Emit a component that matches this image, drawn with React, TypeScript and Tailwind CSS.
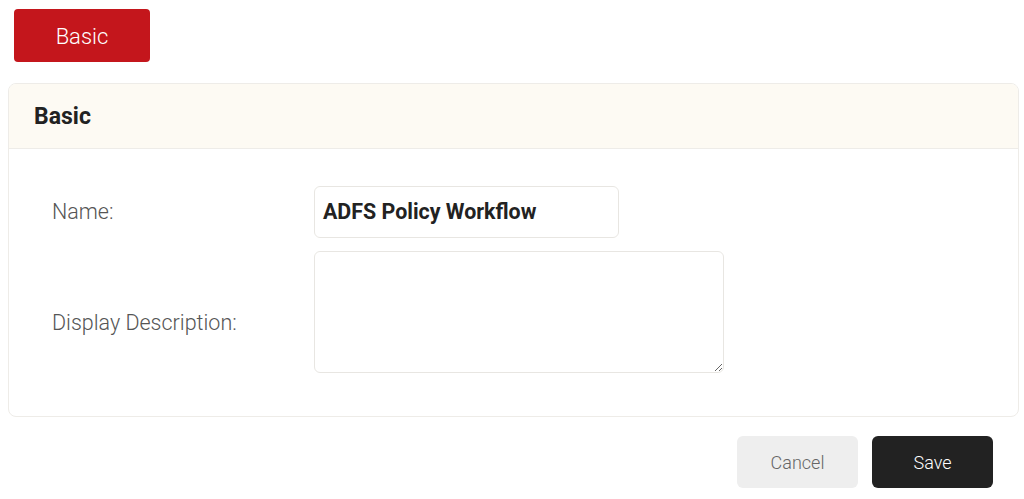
import React from "react";

export default function App() {
  return (
    <div className="w-[1024px] h-[499px] bg-white overflow-hidden" style={{ fontFamily: "Roboto, 'Liberation Sans', sans-serif" }}>
      <div className="pt-[9px] pl-[14px]">
        <button className="w-[136px] h-[53px] rounded-[4px] bg-[#c4161c] text-white text-[22px] font-light pt-[1px]">Basic</button>
      </div>
      <div className="mt-[21px] ml-[8px] w-[1011px] h-[334px] border border-[#eeece8] rounded-[8px] overflow-hidden">
        <div className="h-[65px] bg-[#fdfaf3] border-b border-[#eeece8] flex items-center pl-[25px] pt-[3px]">
          <span className="text-[23px] font-bold text-[#222]">Basic</span>
        </div>
        <div className="pl-[43px] pt-[37px]">
          <div className="flex items-center">
            <div className="w-[262px] text-[21.5px] font-light text-[#555]">Name:</div>
            <div className="w-[305px] h-[52px] border border-[#e8e6e2] rounded-[6px] flex items-center px-[8px] pt-[1px]">
              <span className="text-[21.4px] font-bold text-[#222]">ADFS Policy Workflow</span>
            </div>
          </div>
          <div className="flex mt-[13px]">
            <div className="w-[262px] text-[21.5px] font-light text-[#555] pt-[56px]">Display Description:</div>
            <textarea className="w-[410px] h-[122px] border border-[#e8e6e2] rounded-[6px] outline-none resize-y" />
          </div>
        </div>
      </div>
      <div className="flex justify-end gap-[14px] mt-[19px] pr-[31px]">
        <button className="w-[121px] h-[52px] rounded-[6px] bg-[#eeeeee] text-[#666] text-[18px] font-light">Cancel</button>
        <button className="w-[121px] h-[52px] rounded-[6px] bg-[#222222] text-white text-[18px] font-light">Save</button>
      </div>
    </div>
  );
}
